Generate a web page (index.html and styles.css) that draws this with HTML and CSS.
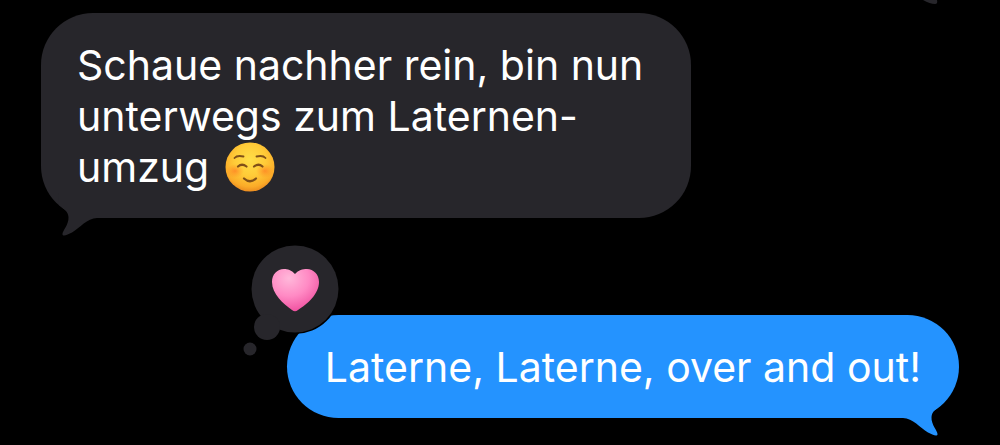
FILE: index.html
```html
<!DOCTYPE html>
<html lang="de">
<head>
<meta charset="utf-8">
<meta name="viewport" content="width=device-width, initial-scale=1">
<title>Chat</title>
<link rel="stylesheet" href="styles.css">
</head>
<body>
<main class="chat">
  <svg class="previous-tail" viewBox="0 0 18 6" aria-hidden="true"><path d="M0 0H14Q15 4 12 4Q7 4 0 0Z"/></svg>
  <article class="bubble received">
    <p class="text">Schaue nachher rein, bin nun unterwegs zum Laternen-<wbr>umzug <svg class="emoji" viewBox="0 0 50 50" role="img" aria-label="Lächelndes Gesicht">
      <defs>
        <radialGradient id="face" cx=".5" cy=".36" r=".64">
          <stop offset="0" stop-color="#ffdf48"/>
          <stop offset=".5" stop-color="#ffcb38"/>
          <stop offset=".85" stop-color="#fbab28"/>
          <stop offset="1" stop-color="#ec8c20"/>
        </radialGradient>
        <radialGradient id="cheek">
          <stop offset="0" stop-color="#ff7a22" stop-opacity=".7"/>
          <stop offset="1" stop-color="#ff8a22" stop-opacity="0"/>
        </radialGradient>
      </defs>
      <circle cx="25" cy="25" r="24.5" fill="url(#face)"/>
      <ellipse cx="10" cy="29" rx="9" ry="7" fill="url(#cheek)"/>
      <ellipse cx="40" cy="29" rx="9" ry="7" fill="url(#cheek)"/>
      <g fill="none" stroke="#805018" stroke-linecap="round">
        <path stroke-width="1.8" d="M9.500 16Q12 13 18.500 14.500M31.500 14.500Q38 13 40.500 16"/>
        <path stroke-width="2.2" d="M13 24.500Q17 21 21.500 24.500M29 24.500Q33.500 21 37.500 24.500"/>
        <path stroke-width="2.2" d="M19 36.500Q25 42 31 36.500"/>
      </g>
    </svg></p>
    <svg class="tail" viewBox="0 0 40 40" aria-hidden="true"><path d="M4 12C9 16.500 13 18 13.500 24C14 32 7 38 7.500 41.500C8 44 13 41.500 17 39.500C25 35 32 25 42 25V0H3Z"/></svg>
  </article>
  <article class="bubble sent">
    <p class="text">Laterne, Laterne, over and out!</p>
    <svg class="tail" viewBox="0 0 40 40" aria-hidden="true"><path d="M4 12C9 16.500 13 18 13.500 24C14 32 7 38 7.500 41.500C8 44 13 41.500 17 39.500C25 35 32 25 42 25V0H3Z"/></svg>
    <svg class="reaction" viewBox="0 0 100 116" role="img" aria-label="Herz">
      <defs>
        <radialGradient id="heart" cx=".36" cy=".22" r=".85">
          <stop offset="0" stop-color="#ffb8da"/>
          <stop offset=".5" stop-color="#ff8ac4"/>
          <stop offset="1" stop-color="#ee499b"/>
        </radialGradient>
      </defs>
      <g class="reaction-edge"><circle cx="54" cy="47" r="45"/><circle cx="26" cy="85" r="13"/></g>
      <circle cx="54" cy="47" r="43.500"/>
      <circle cx="26" cy="85" r="13"/>
      <circle cx="9" cy="107" r="6.500"/>
      <path fill="url(#heart)" d="M54 32C50.500 28 46.500 27 43 27C36 27 31 32.500 31 40C31 52 42.500 62 51 68Q54 70.500 57 68C66.500 62 78 52 78 40C78 32.500 72.500 27 66 27C61.500 27 57.500 28 54 32Z"/>
    </svg>
  </article>
</main>
</body>
</html>
```
FILE: styles.css
```css
* {
  box-sizing: border-box;
}

body {
  margin: 0;
  background: #000;
  font-family: Inter, "Noto Sans", sans-serif;
}

.chat {
  position: relative;
  display: flex;
  flex-direction: column;
  gap: 97px;
  padding: 13px 41px 27px;
  overflow: hidden;
}

.bubble {
  position: relative;
  padding: 27px 36px 25px;
  border-radius: 52px;
  color: #fff;
}

.received {
  align-self: flex-start;
  max-width: 650px;
  background: #27262b;
  fill: #27262b;
}

.sent {
  align-self: flex-end;
  padding-inline: 38px;
  background: #2493ff;
  fill: #2493ff;
}

.text {
  margin: 0;
  font-size: 41px;
  line-height: 51px;
}

.emoji {
  width: 50px;
  height: 50px;
  margin: -10px 0 -10px 4px;
  vertical-align: baseline;
}

.tail {
  position: absolute;
  left: 14px;
  bottom: -15px;
  width: 40px;
  height: 40px;
  overflow: visible;
}

.sent .tail {
  left: auto;
  right: 14px;
  transform: scaleX(-1);
}

.previous-tail {
  position: absolute;
  top: 0;
  right: 59px;
  width: 18px;
  height: 6px;
  fill: #27262b;
}

.reaction {
  position: absolute;
  top: -73px;
  left: -46px;
  width: 100px;
  height: 116px;
  fill: #27262b;
}

.reaction-edge {
  fill: #000;
}
```
